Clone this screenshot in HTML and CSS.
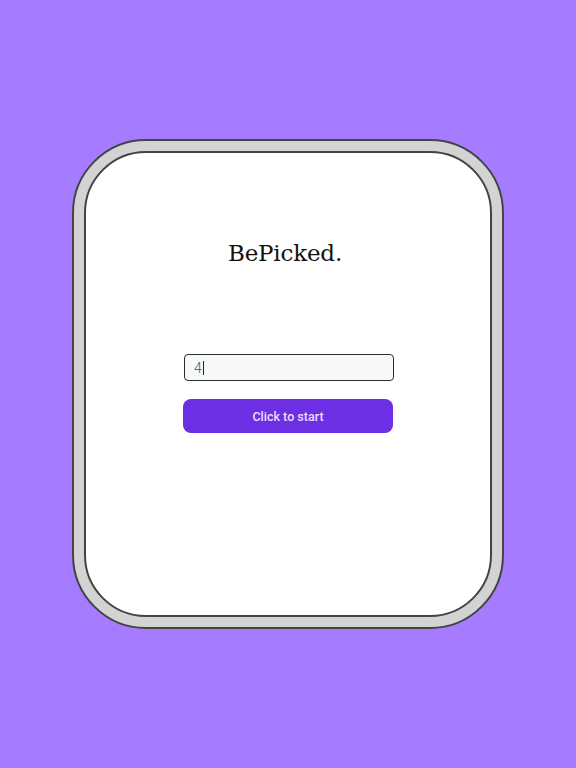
FILE: index.html
```html
<!DOCTYPE html>
<html lang="en">
<head>
<meta charset="utf-8">
<title>BePicked.</title>
<link rel="stylesheet" href="styles.css">
</head>
<body>
<main class="stage">
  <div class="frame">
    <div class="card">
      <h1 class="title">BePicked.</h1>
      <div class="form">
        <div class="field"><span class="value">4</span><span class="caret"></span></div>
        <button class="start" type="button">Click to start</button>
      </div>
    </div>
  </div>
</main>
</body>
</html>
```
FILE: styles.css
```css
* { box-sizing: border-box; }
html, body { margin: 0; padding: 0; }
body {
  background: #a57cff;
  width: 576px;
  height: 768px;
  font-family: "Roboto", "Liberation Sans", sans-serif;
}
.stage {
  padding: 139px 72px 0 72px;
}
.frame {
  width: 432px;
  height: 490px;
  background: #d3d3d3;
  border: 2px solid #444444;
  border-radius: 74px;
  padding: 10px;
}
.card {
  width: 100%;
  height: 100%;
  background: #ffffff;
  border: 2px solid #444444;
  border-radius: 62px;
  display: flex;
  flex-direction: column;
  align-items: center;
  padding-top: 84px;
}
.title {
  margin: 0;
  font-family: "DejaVu Serif", "Liberation Serif", serif;
  font-weight: normal;
  font-size: 23px;
  line-height: 32px;
  color: #111;
  margin-left: -6px;
  letter-spacing: -0.2px;
}
.form {
  margin-top: 85px;
  display: flex;
  flex-direction: column;
  gap: 18px;
  margin-left: 2px;
}
.field {
  width: 210px;
  height: 27px;
  border: 1.5px solid #2d2d2d;
  border-radius: 4px;
  background: #f7f8f9;
  display: flex;
  align-items: center;
  padding-left: 9px;
  font-size: 14px;
  font-weight: 300;
  color: #555;
}
.caret {
  display: inline-block;
  width: 1px;
  height: 14px;
  background: #222;
  margin-left: 1px;
}
.start {
  width: 210px;
  height: 34px;
  border: none;
  border-radius: 8px;
  background: #6d2fe3;
  color: #ecdfff;
  font-family: "Roboto", "Liberation Sans", sans-serif;
  font-size: 12.5px;
  font-weight: 500;
  padding: 1px 0 0 0;
  margin-left: -1px;
}
```
